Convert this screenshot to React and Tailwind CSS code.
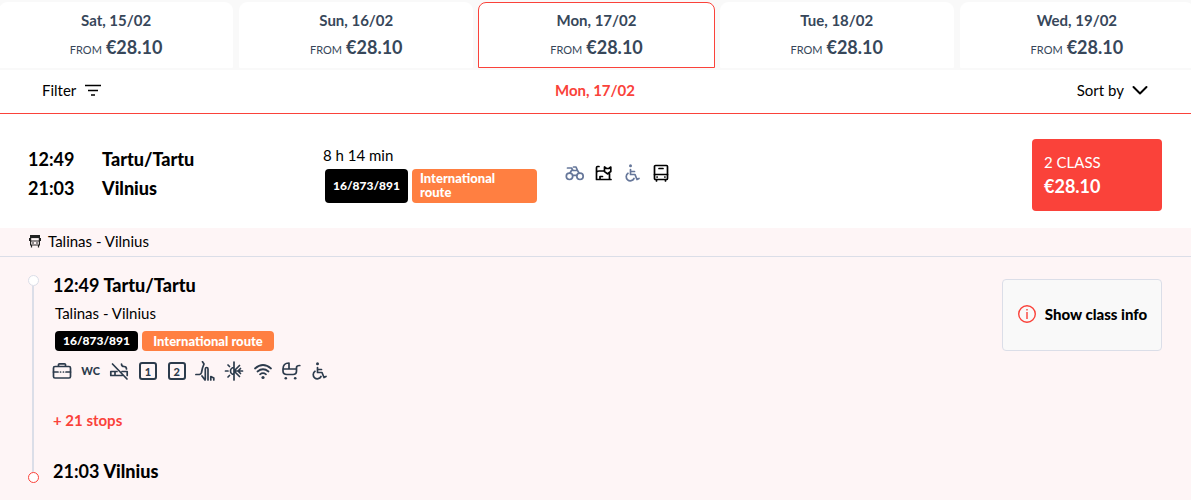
import React, { useState } from "react";

const days = [
  { id: "15", label: "Sat, 15/02", price: "€28.10" },
  { id: "16", label: "Sun, 16/02", price: "€28.10" },
  { id: "17", label: "Mon, 17/02", price: "€28.10" },
  { id: "18", label: "Tue, 18/02", price: "€28.10" },
  { id: "19", label: "Wed, 19/02", price: "€28.10" },
];

const Icon = ({ label, className = "size-5 shrink-0", children }) => (
  <svg
    viewBox="0 0 20 20"
    role="img"
    aria-label={label}
    className={className}
    fill="none"
    stroke="currentColor"
    strokeWidth="1.7"
    strokeLinecap="round"
    strokeLinejoin="round"
  >
    {children}
  </svg>
);

const BikeIcon = () => (
  <Icon label="Bicycles" className="size-5 text-[#66779a]">
    <circle cx="4.5" cy="13.300" r="3.200" />
    <circle cx="15" cy="13.300" r="3.200" />
    <path d="M2.500 5H6.500L8 7.500H12.500L11 4H8.500M5 10 6.500 7.500M12.500 7.500 14 10M7.800 12.300H11.500" />
  </Icon>
);

const PetIcon = () => (
  <Icon label="Pets" className="size-5 text-black">
    <path d="M5 3.500H3.500Q2.500 3.500 2.500 5V16.500H17M2.500 9.500Q3 8 5 8H9.500M6 16V13.500H8.500M10.500 4V8.500L13.500 10.800 16.800 8.500V4L14.800 5.500H12.500ZM15.500 10.500V16.500" />
  </Icon>
);

const WheelchairIcon = ({ className }) => (
  <Icon label="Wheelchair access" className={className}>
    <circle cx="7.5" cy="2.800" r="1.500" fill="currentColor" stroke="none" />
    <path d="M7.500 6.500V11.500H12L14 16.500L16 15.500M7.500 8.500H11.500M5 10.300A4.100 4.100 0 1 0 11 15.500" />
  </Icon>
);

const CoachIcon = () => (
  <Icon label="Bus" className="size-5 text-black">
    <rect x="2.500" y="2.500" width="13" height="14" rx="1" />
    <path d="M2.500 11.500H15.500M7 5.500H11M4.500 17V18M13.500 17V18M5 14H5.200M12.800 14H13" />
  </Icon>
);

const SmallBusIcon = () => (
  <svg viewBox="0 0 12 14" className="mt-px h-3.5 w-3 text-[#222]" fill="none" stroke="currentColor" strokeWidth="1.2">
    <path d="M1.600 1.600H10.400V11H1.600ZM1.600 7H10.400M.6 4V7M11.400 4V7M2.500 11V13.500M9.500 11V13.500" />
    <path d="M2 2.500H10V3.500H2Z" fill="currentColor" />
    <path d="M3 9H5M7 9H9" />
  </svg>
);

const LuggageIcon = () => (
  <Icon label="Luggage">
    <rect x="1.500" y="5.500" width="17" height="11.500" rx="1.500" />
    <path d="M1.500 11H6M8.500 11H8.600M11.400 11H11.500M14 11H18.500M6.500 5V3.500Q6.500 2.800 7.500 2.800H12.500Q13.500 2.800 13.500 3.500V5" />
  </Icon>
);

const NoSmokingIcon = () => (
  <Icon label="No smoking">
    <path d="M3.500 3 18 18M8 10.500H1.800V14.500H13M6 10.500V14.500M13 10.500H18.200V14.500M12.500 3Q12.500 5.500 15 5.500Q17.500 5.500 17.500 8" />
  </Icon>
);

const SeatIcon = () => (
  <Icon label="Reclining seats">
    <path d="M7.500 .8 9 3 7.500 7 6.500 11.500Q6 13.300 4.500 13.500H.9M10.300 18V8Q10.300 6.500 11.700 6.500Q13 6.500 13 8V19M7 15 10 19M15.800 19V15.500L18.800 17V19" />
  </Icon>
);

const ClimateIcon = () => (
  <Icon label="Air conditioning">
    <path d="M10 1V19M10 6.500A3.500 3.500 0 0 0 10 13.500M1.500 10H4M4 4 5.500 5.500M4 16 5.500 14.500M10 10H18.500M16.500 7.500 14 10 16.500 12.500M10 10 15.500 4.500M10 10 15.500 15.500" />
  </Icon>
);

const WifiIcon = () => (
  <Icon label="Wi-Fi">
    <path d="M2 7.500Q10 .5 18 7.500M4.500 10.500Q10 6 15.500 10.500M7 13.300Q10 11 13 13.300" />
    <circle cx="10" cy="16.500" r="1.600" fill="currentColor" stroke="none" />
  </Icon>
);

const StrollerIcon = () => (
  <Icon label="Stroller">
    <path d="M8 7.500V2Q2 2 2 8V10Q2 13.500 6 13.500H12Q15.500 13.500 15.500 10V6.500Q15.500 4.500 18.800 4.500M2 8H15.500" />
    <circle cx="4.800" cy="17.300" r="1.300" fill="currentColor" stroke="none" />
    <circle cx="14.200" cy="17.300" r="1.300" fill="currentColor" stroke="none" />
  </Icon>
);

const ClassBox = ({ number }) => (
  <span className="flex size-5 items-center justify-center">
    <span className="flex size-[18px] items-center justify-center rounded-[3px] border-2 border-current text-[11px] leading-none font-black">
      {number}
    </span>
  </span>
);

const App = () => {
  const [selected, setSelected] = useState("17");

  return (
    <div className="min-h-screen bg-[#fef5f6] font-['Lato',sans-serif] text-[15px] leading-5 text-black">
      {/* Date tabs */}
      <div className="overflow-hidden bg-[#f9f9f9] py-0.5">
        <div className="-mr-[3px] -ml-px grid grid-cols-5 gap-1.5">
          {days.map((day) => (
            <button
              key={day.id}
              type="button"
              onClick={() => setSelected(day.id)}
              className={
                "flex h-[66px] flex-col items-center rounded-t-lg border bg-white pt-[7px] text-[#37475a] " +
                (selected === day.id ? "-mx-px border-[#fa423a]" : "border-white")
              }
            >
              <span className="font-bold">{day.label}</span>
              <span className="mt-[5px] flex items-baseline gap-1 leading-6">
                <span className="text-[11px]">FROM</span>
                <span className="text-[18px] font-bold">{day.price}</span>
              </span>
            </button>
          ))}
        </div>
      </div>

      {/* Filter bar */}
      <div className="grid h-11 grid-cols-3 items-center border-b border-[#fa423a] bg-white pr-[43px] pb-[3px] pl-[42px]">
        <button type="button" className="flex items-center gap-2 justify-self-start">
          Filter
          <svg viewBox="0 0 18 14" className="h-3.5 w-[18px]" stroke="currentColor" strokeWidth="1.4">
            <path d="M1 2.500H17M4 7.500H14M7 12H11" />
          </svg>
        </button>
        <h2 className="text-center font-bold text-[#fa423a]">Mon, 17/02</h2>
        <button type="button" className="flex items-center gap-2 justify-self-end">
          Sort by
          <svg viewBox="0 0 16 10" className="h-2.5 w-4" fill="none" stroke="currentColor" strokeWidth="2" strokeLinecap="round" strokeLinejoin="round">
            <path d="M1.500 2 8 8.500 14.500 2" />
          </svg>
        </button>
      </div>

      {/* Trip summary */}
      <div className="flex h-[114px] items-start bg-white pt-[25px] pr-[29px] pl-7">
        <div className="grid w-[295px] shrink-0 grid-cols-[74px_1fr] gap-y-[5px] pt-2 text-[18px] leading-6 font-bold">
          <span>12:49</span>
          <span className="font-black">Tartu/Tartu</span>
          <span>21:03</span>
          <span className="font-black">Vilnius</span>
        </div>
        <div className="w-[242px] shrink-0 pt-1.5">
          <div>8 h 14 min</div>
          <div className="mt-1 ml-0.5 flex gap-1 text-[13px] leading-[14px] font-black text-white">
            <span className="flex h-[34px] w-[83px] items-center justify-center rounded bg-black text-[12px]">16/873/891</span>
            <span className="flex h-[34px] w-[125px] items-center rounded bg-[#ff7f41] pr-6 pb-0.5 pl-2">International route</span>
          </div>
        </div>
        <div className="flex gap-[9px] pt-6">
          <BikeIcon />
          <PetIcon />
          <WheelchairIcon className="size-5 text-[#66779a]" />
          <CoachIcon />
        </div>
        <button type="button" className="ml-auto h-[72px] w-[130px] rounded bg-[#fa423a] px-3 pb-0.5 text-left text-white">
          <span className="block leading-6">2 CLASS</span>
          <span className="block text-[18px] leading-6 font-bold">€28.10</span>
        </button>
      </div>

      {/* Leg header */}
      <div className="flex h-[29px] items-center gap-[7px] border-b border-[#dbdee8] pb-[3px] pl-[29px]">
        <SmallBusIcon />
        Talinas - Vilnius
      </div>

      {/* Leg details */}
      <div className="flex items-start pt-[18px] pr-[29px] pb-4 pl-7">
        <div className="flex w-[25px] shrink-0 self-stretch">
          <div className="flex w-[11px] flex-col">
            <span className="size-[11px] rounded-full border border-[#dbdee8] bg-white" />
            <span className="ml-1 w-0.5 flex-1 bg-[#dbdee8]" />
            <span className="size-[11px] rounded-full border border-[#fa423a] bg-white" />
          </div>
        </div>
        <div className="-mt-0.5">
          <div className="flex gap-1 text-[18px] leading-6 font-bold">
            <span>12:49</span>
            <span className="font-black">Tartu/Tartu</span>
          </div>
          <div className="mt-1.5 ml-0.5">Talinas - Vilnius</div>
          <div className="mt-2 ml-0.5 flex gap-1 text-[13px] leading-5 font-black text-white">
            <span className="w-[83px] rounded bg-black text-center text-[12px]">16/873/891</span>
            <span className="w-[132px] rounded bg-[#ff7f41] text-center">International route</span>
          </div>
          <div className="mt-2.5 -ml-px flex w-[278px] items-center justify-between text-[#2c3b4c]">
            <LuggageIcon />
            <span className="w-5 text-center text-[11px] font-black">WC</span>
            <NoSmokingIcon />
            <ClassBox number="1" />
            <ClassBox number="2" />
            <SeatIcon />
            <ClimateIcon />
            <WifiIcon />
            <StrollerIcon />
            <WheelchairIcon />
          </div>
          <button type="button" className="mt-[29px] block font-bold text-[#fa423a]">
            + 21 stops
          </button>
          <div className="mt-[29px] flex gap-1 text-[18px] leading-6 font-bold">
            <span>21:03</span>
            <span className="font-black">Vilnius</span>
          </div>
        </div>
        <button
          type="button"
          className="mt-1 ml-auto flex h-[72px] w-40 items-center justify-center gap-2 rounded border border-[#dbdee8] bg-[#f9f9f9] pb-0.5 font-black"
        >
          <svg viewBox="0 0 20 20" className="size-5 shrink-0 text-[#fa423a]" fill="none" stroke="currentColor" strokeWidth="1.4">
            <circle cx="10" cy="10" r="8.300" />
            <path d="M10 8V15M10 5V6.500" />
          </svg>
          Show class info
        </button>
      </div>
    </div>
  );
};

export default App;
